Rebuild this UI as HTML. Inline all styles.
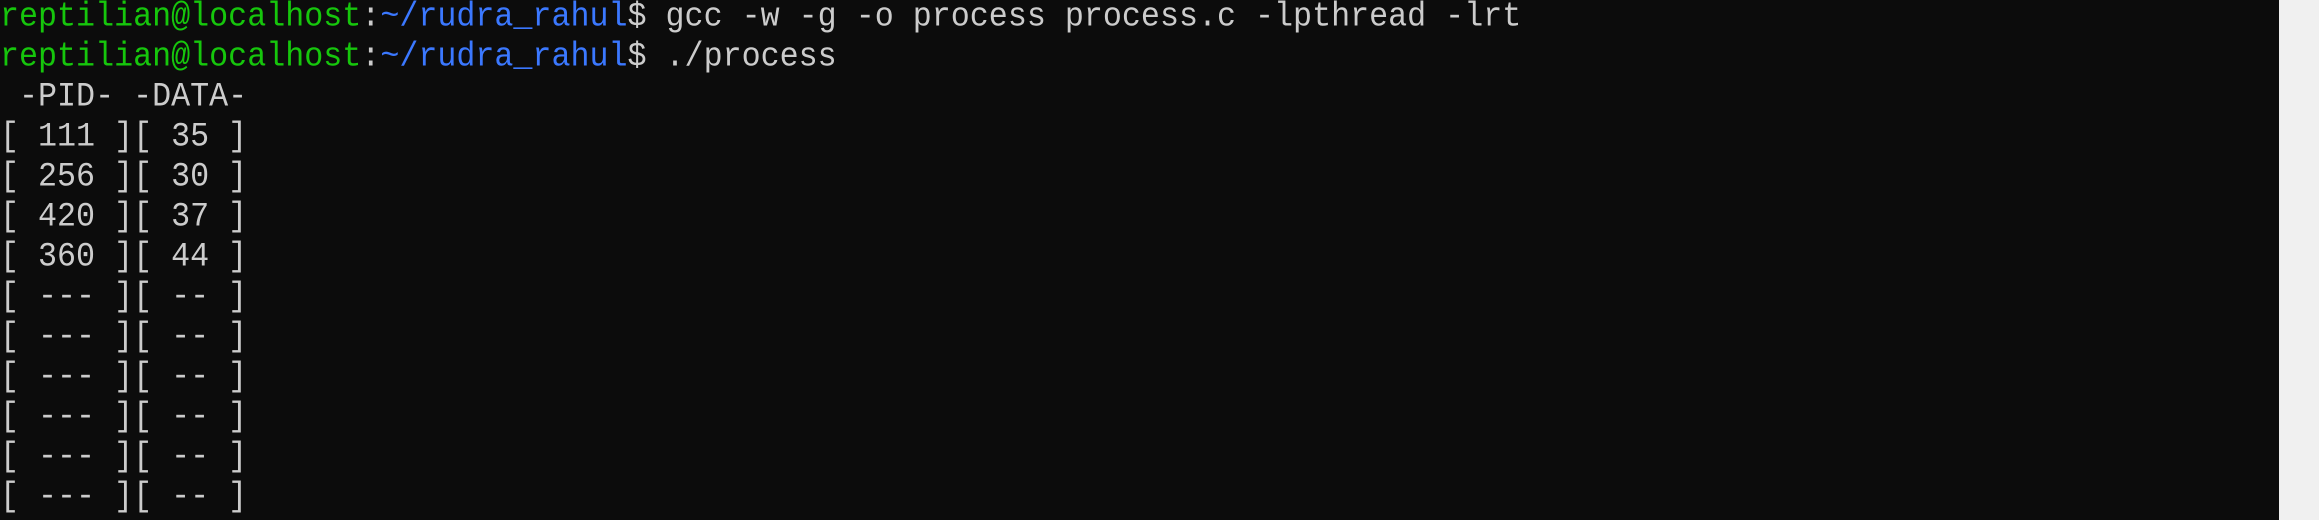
<!DOCTYPE html>
<html><head><style>
html,body{margin:0;padding:0;width:2319px;height:520px;overflow:hidden;background:#f0f0f0}
.term{position:absolute;left:0;top:0;width:2279px;height:520px;background:#0c0c0c}
.l{position:absolute;left:0px;height:40px;line-height:40px;white-space:pre;font-family:"Liberation Mono",monospace;font-size:31.7px;color:#cccccc;transform:scaleY(1.08);transform-origin:0 50%}
.g{color:#16c60c}.b{color:#3b78ff}
</style></head><body><div class="term">
<div class="l" style="top:-3px"><span class="g">reptilian@localhost</span>:<span class="b">~/rudra_rahul</span>$ gcc -w -g -o process process.c -lpthread -lrt</div>
<div class="l" style="top:37px"><span class="g">reptilian@localhost</span>:<span class="b">~/rudra_rahul</span>$ ./process</div>
<div class="l" style="top:77px"> -PID- -DATA-</div>
<div class="l" style="top:117px">[ 111 ][ 35 ]</div>
<div class="l" style="top:157px">[ 256 ][ 30 ]</div>
<div class="l" style="top:197px">[ 420 ][ 37 ]</div>
<div class="l" style="top:237px">[ 360 ][ 44 ]</div>
<div class="l" style="top:277px">[ --- ][ -- ]</div>
<div class="l" style="top:317px">[ --- ][ -- ]</div>
<div class="l" style="top:357px">[ --- ][ -- ]</div>
<div class="l" style="top:397px">[ --- ][ -- ]</div>
<div class="l" style="top:437px">[ --- ][ -- ]</div>
<div class="l" style="top:477px">[ --- ][ -- ]</div>
</div></body></html>
